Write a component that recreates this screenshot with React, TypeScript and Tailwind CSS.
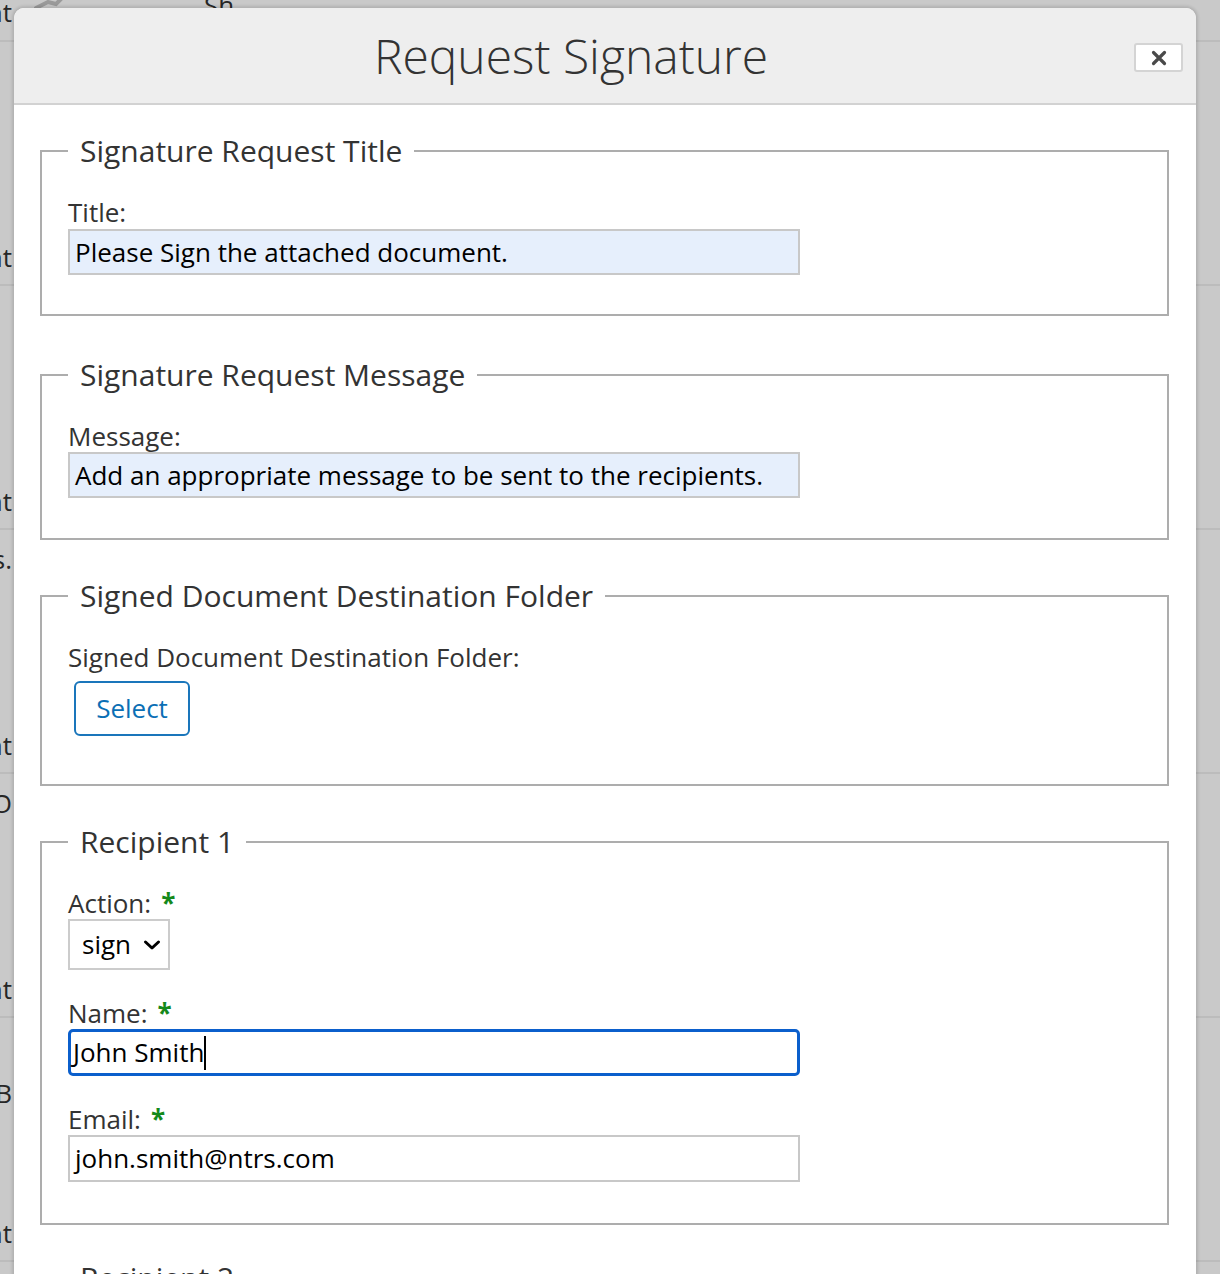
import React from "react";

function Cut({ text }: { text: string }) {
  return (
    <div className="w-[12px] overflow-hidden flex justify-end">
      <span className="whitespace-nowrap text-[26px] leading-[30px] text-[#262626]">{text}</span>
    </div>
  );
}

function BgRow({ topText, bottomText, topPad }: { topText?: string; bottomText?: string; topPad: string }) {
  return (
    <div className="h-[244px] border-b-2 border-[#bcbcbc] flex flex-col justify-between pb-[12px]">
      <div className={topPad}>{topText ? <Cut text={topText} /> : null}</div>
      {bottomText ? <Cut text={bottomText} /> : <div />}
    </div>
  );
}

function Section({ legend, children, cls }: { legend: string; children: React.ReactNode; cls: string }) {
  return (
    <fieldset className={"border-2 border-[#adadad] px-[26px] pt-[27px] " + cls}>
      <legend className="px-3 text-[30px] leading-[36px] text-[#333333]">{legend}</legend>
      {children}
    </fieldset>
  );
}

function Label({ children, req }: { children: React.ReactNode; req?: boolean }) {
  return (
    <div className="text-[26px] leading-[32px] text-[#333333] flex items-center">
      <span>{children}</span>
      {req ? <span className="ml-[10px] text-[#14891a] font-bold">*</span> : null}
    </div>
  );
}

export default function App() {
  return (
    <div className="relative h-[1274px] w-[1220px] overflow-hidden bg-[#c9c9c9] font-['Open_Sans',sans-serif]">
      {/* background page under the overlay */}
      <div className="h-[42px] border-b-2 border-[#bcbcbc] flex items-start">
        <div className="-mt-[3px]">
          <Cut text="Sent" />
        </div>
        <svg width="30" height="14" viewBox="0 0 30 14" className="ml-[22px] -mt-[4px]">
          <path d="M2 12 L14 6 L22 8 L28 2" stroke="#9a9a9a" strokeWidth="4" fill="none" strokeLinecap="round" />
        </svg>
        <span className="ml-[140px] -mt-[14px] text-[26px] text-[#262626]">Sh</span>
      </div>
      <BgRow bottomText="Sent" topPad="pt-[20px]" />
      <BgRow bottomText="Sent" topPad="pt-[20px]" />
      <BgRow topText="s." bottomText="Sent" topPad="pt-[14px]" />
      <BgRow topText="CO" bottomText="Sent" topPad="pt-[14px]" />
      <BgRow topText="B" bottomText="Sent" topPad="pt-[60px]" />

      {/* modal */}
      <div className="absolute left-[14px] top-[8px] w-[1182px] rounded-t-[10px] bg-white shadow-[0_0_3px_2px_rgba(0,0,0,0.12)]">
        <div className="h-[97px] rounded-t-[10px] bg-[#eeeeee] border-b-2 border-[#d2d2d2] flex items-center">
          <h1 className="flex-1 text-center pr-[6px] text-[48px] font-light text-[#333333] leading-none">
            Request Signature
          </h1>
          <button className="mt-[4px] mr-[13px] w-[49px] h-[29px] bg-white border-2 border-[#d4d4d4] rounded-[3px] flex items-center justify-center">
            <svg width="16" height="16" viewBox="0 0 16 16">
              <path d="M2.5 2.5 L13.5 13.5 M13.5 2.5 L2.5 13.5" stroke="#4a4a4a" strokeWidth="3.2" strokeLinecap="round" />
            </svg>
          </button>
        </div>

        <div className="pl-[26px] pr-[27px] pt-[28px] flex flex-col pb-[60px]">
          <Section legend="Signature Request Title" cls="pb-[39px]">
            <Label>Title:</Label>
            <div className="mt-[1px] w-[732px] h-[46px] border-2 border-[#c8c8c8] bg-[#e6effc] px-[5px] flex items-center text-[26px] text-black">
              Please Sign the attached document.
            </div>
          </Section>

          <Section legend="Signature Request Message" cls="mt-[41px] pb-[40px]">
            <Label>Message:</Label>
            <div className="w-[732px] h-[46px] border-2 border-[#c8c8c8] bg-[#e6effc] px-[5px] flex items-center text-[26px] text-black">
              Add an appropriate message to be sent to the recipients.
            </div>
          </Section>

          <Section legend="Signed Document Destination Folder" cls="mt-[38px] pb-[48px]">
            <Label>Signed Document Destination Folder:</Label>
            <button className="mt-[8px] ml-[6px] w-[116px] h-[55px] border-2 border-[#1a76bb] rounded-[6px] text-[26px] text-[#0b6fb5] bg-white">
              Select
            </button>
          </Section>

          <Section legend="Recipient 1" cls="mt-[38px] pb-[41px]">
            <Label req>Action:</Label>
            <div className="w-[102px] h-[51px] border-2 border-[#cccccc] flex items-center pl-[12px] text-[26px] text-black">
              <span>sign</span>
              <svg width="18" height="12" viewBox="0 0 18 12" className="ml-[12px]">
                <path d="M2.5 3 L9 9 L15.5 3" stroke="#000" strokeWidth="3" fill="none" strokeLinecap="round" strokeLinejoin="round" />
              </svg>
            </div>

            <div className="mt-[27px]">
              <Label req>Name:</Label>
            </div>
            <div className="w-[732px] h-[47px] border-[3px] border-[#0b5fcc] rounded-[5px] bg-white pl-[2px] flex items-center text-[26px] text-black">
              <span>John Smith</span>
              <span className="w-[2px] h-[34px] bg-black" />
            </div>

            <div className="mt-[27px]">
              <Label req>Email:</Label>
            </div>
            <div className="w-[732px] h-[47px] border-2 border-[#c8c8c8] bg-white px-[5px] flex items-center text-[26px] text-black">
              john.smith@ntrs.com
            </div>
          </Section>

          <Section legend="Recipient 2" cls="mt-[35px] pb-[40px]">
            <Label req>Action:</Label>
            <div className="h-[120px]" />
          </Section>
        </div>
      </div>
    </div>
  );
}
